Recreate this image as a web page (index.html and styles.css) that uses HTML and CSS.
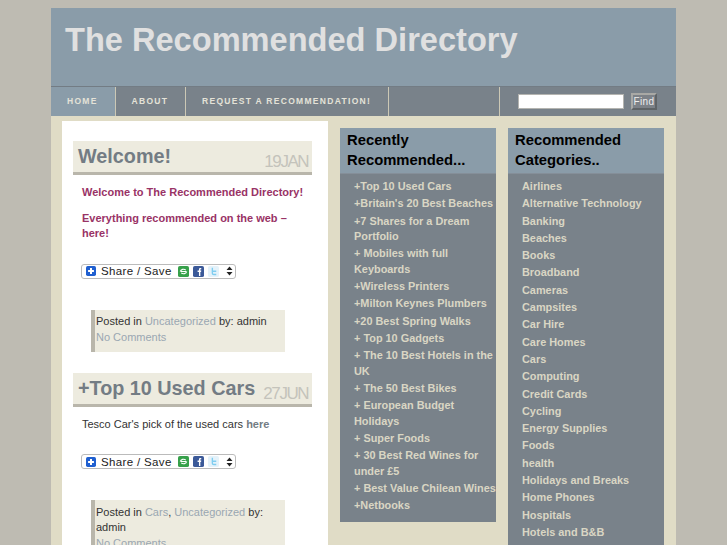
FILE: index.html
```html
<!DOCTYPE html>
<html lang="en">
<head>
  <meta charset="UTF-8">
  <meta name="viewport" content="width=device-width, initial-scale=1.0">
  <title>The Recommended Directory</title>
  <link rel="stylesheet" href="styles.css">
</head>
<body>
  <div class="wrapper">
    <div class="header">
      <h1>The Recommended Directory</h1>
    </div>

    <div class="nav">
      <ul class="nav-links">
        <li class="current"><a href="#">Home</a></li>
        <li><a href="#">About</a></li>
        <li><a href="#">Request a Recommendation!</a></li>
        <li class="nav-blank"></li>
      </ul>
      <form class="search">
        <input type="text" class="search-input">
        <input type="button" class="search-btn" value="Find">
      </form>
    </div>

    <div class="content">
      <div class="main">
        <div class="post">
          <div class="post-title">
            <h2>Welcome!</h2>
            <span class="post-date">19 JAN</span>
          </div>
          <div class="post-body">
            <p class="intro">Welcome to The Recommended Directory!</p>
            <p class="intro">Everything recommended on the web &#8211; here!</p>
            <div class="share">
              <svg class="share-plus" width="12" height="12" viewBox="0 0 12 12"><rect width="12" height="12" rx="2" fill="#1f5fd0"/><path d="M6 2.500v7M2.500 6h7" stroke="#fff" stroke-width="2.400"/></svg>
              <span class="share-label">Share / Save</span>
              <svg class="share-icon" width="12" height="12" viewBox="0 0 12 12"><rect width="12" height="12" rx="2" fill="#36a04a"/><path d="M2.500 6a3.500 3 0 0 1 6-1.500M9.500 6a3.500 3 0 0 1-6 1.500M3 6h6" stroke="#fff" stroke-width="1.200" fill="none"/></svg>
              <svg class="share-icon" width="12" height="12" viewBox="0 0 12 12"><rect width="12" height="12" rx="2" fill="#3b5998"/><path d="M6.500 11V6.500H5V5h1.500V3.800C6.500 2.500 7.300 2 9 2.200v1.300c-.9 0-1 .1-1 .7V5h1l-.2 1.500H8V11z" fill="#fff"/></svg>
              <svg class="share-icon" width="12" height="12" viewBox="0 0 12 12"><rect width="12" height="12" rx="2" fill="#e4f2fa"/><path d="M4 2v5.500C4 9 5 10 6.500 10H9V8.500H6.500C5.800 8.500 5.500 8 5.500 7.500V6.500H9V5H5.500V2z" fill="#7fcdf0"/></svg>
              <svg class="share-arrows" width="7" height="10" viewBox="0 0 7 10"><path d="M3.500 .5 6.500 4H.5zM3.500 9.500 .5 6h6z" fill="#222"/></svg>
            </div>
            <div class="post-meta">
              Posted in <a href="#">Uncategorized</a> by: admin<br>
              <a href="#">No Comments</a>
            </div>
          </div>
        </div>

        <div class="post">
          <div class="post-title">
            <h2>+Top 10 Used Cars</h2>
            <span class="post-date">27 JUN</span>
          </div>
          <div class="post-body">
            <p>Tesco Car's pick of the used cars <a class="more" href="#">here</a></p>
            <div class="share">
              <svg class="share-plus" width="12" height="12" viewBox="0 0 12 12"><rect width="12" height="12" rx="2" fill="#1f5fd0"/><path d="M6 2.500v7M2.500 6h7" stroke="#fff" stroke-width="2.400"/></svg>
              <span class="share-label">Share / Save</span>
              <svg class="share-icon" width="12" height="12" viewBox="0 0 12 12"><rect width="12" height="12" rx="2" fill="#36a04a"/><path d="M2.500 6a3.500 3 0 0 1 6-1.500M9.500 6a3.500 3 0 0 1-6 1.500M3 6h6" stroke="#fff" stroke-width="1.200" fill="none"/></svg>
              <svg class="share-icon" width="12" height="12" viewBox="0 0 12 12"><rect width="12" height="12" rx="2" fill="#3b5998"/><path d="M6.500 11V6.500H5V5h1.500V3.800C6.500 2.500 7.300 2 9 2.200v1.300c-.9 0-1 .1-1 .7V5h1l-.2 1.500H8V11z" fill="#fff"/></svg>
              <svg class="share-icon" width="12" height="12" viewBox="0 0 12 12"><rect width="12" height="12" rx="2" fill="#e4f2fa"/><path d="M4 2v5.500C4 9 5 10 6.500 10H9V8.500H6.500C5.800 8.500 5.500 8 5.500 7.500V6.500H9V5H5.500V2z" fill="#7fcdf0"/></svg>
              <svg class="share-arrows" width="7" height="10" viewBox="0 0 7 10"><path d="M3.500 .5 6.500 4H.5zM3.500 9.500 .5 6h6z" fill="#222"/></svg>
            </div>
            <div class="post-meta">
              Posted in <a href="#">Cars</a>, <a href="#">Uncategorized</a> by: admin<br>
              <a href="#">No Comments</a>
            </div>
          </div>
        </div>
      </div>

      <div class="sidebar sidebar-recent">
        <h3>Recently Recommended...</h3>
        <ul>
          <li><a href="#">+Top 10 Used Cars</a></li>
          <li><a href="#">+Britain's 20 Best Beaches</a></li>
          <li><a href="#">+7 Shares for a Dream Portfolio</a></li>
          <li><a href="#">+ Mobiles with full Keyboards</a></li>
          <li><a href="#">+Wireless Printers</a></li>
          <li><a href="#">+Milton Keynes Plumbers</a></li>
          <li><a href="#">+20 Best Spring Walks</a></li>
          <li><a href="#">+ Top 10 Gadgets</a></li>
          <li><a href="#">+ The 10 Best Hotels in the UK</a></li>
          <li><a href="#">+ The 50 Best Bikes</a></li>
          <li><a href="#">+ European Budget Holidays</a></li>
          <li><a href="#">+ Super Foods</a></li>
          <li><a href="#">+ 30 Best Red Wines for under £5</a></li>
          <li><a href="#">+ Best Value Chilean Wines</a></li>
          <li><a href="#">+Netbooks</a></li>
        </ul>
      </div>

      <div class="sidebar">
        <h3>Recommended Categories..</h3>
        <ul>
          <li><a href="#">Airlines</a></li>
          <li><a href="#">Alternative Technology</a></li>
          <li><a href="#">Banking</a></li>
          <li><a href="#">Beaches</a></li>
          <li><a href="#">Books</a></li>
          <li><a href="#">Broadband</a></li>
          <li><a href="#">Cameras</a></li>
          <li><a href="#">Campsites</a></li>
          <li><a href="#">Car Hire</a></li>
          <li><a href="#">Care Homes</a></li>
          <li><a href="#">Cars</a></li>
          <li><a href="#">Computing</a></li>
          <li><a href="#">Credit Cards</a></li>
          <li><a href="#">Cycling</a></li>
          <li><a href="#">Energy Supplies</a></li>
          <li><a href="#">Foods</a></li>
          <li><a href="#">health</a></li>
          <li><a href="#">Holidays and Breaks</a></li>
          <li><a href="#">Home Phones</a></li>
          <li><a href="#">Hospitals</a></li>
          <li><a href="#">Hotels and B&amp;B</a></li>
          <li><a href="#">Insurance</a></li>
        </ul>
      </div>
    </div>
  </div>
</body>
</html>
```

FILE: styles.css
```css
/* General Styles */
html {
  overflow: hidden;
  height: 100%;
}

body {
  font-family: 'Liberation Sans', Arial, sans-serif;
  font-size: 11px;
  background: #bebbb2;
  margin: 0;
  height: 100%;
  overflow: hidden;
  color: #333;
}

a {
  text-decoration: none;
}

.wrapper {
  width: 625px;
  margin: 8px 0 0 51px;
}

/* Header */
.header {
  background: #8a9ca9;
  height: 78px;
  box-sizing: border-box;
  padding: 14px 14px 0;
}

h1 {
  margin: 0;
  font-size: 32.600px;
  line-height: 36px;
  color: #e0e0e0;
}

/* Navigation */
.nav {
  display: flex;
  justify-content: space-between;
  height: 30px;
  background: #79828a;
  border-top: 1px solid #737c84;
  box-sizing: border-box;
}

.nav-links {
  display: flex;
  list-style: none;
  margin: 0;
  padding: 0;
}

.nav-links li {
  border-right: 1px solid #ccc8b5;
}

.nav-links a {
  display: block;
  padding: 0 16.800px 0 16px;
  line-height: 28px;
  font-size: 8.500px;
  font-weight: bold;
  letter-spacing: 1.300px;
  white-space: nowrap;
  text-transform: uppercase;
  color: #e4e2d8;
}

.nav-links .current {
  background: #8a9ca9;
}

.nav-links .nav-blank {
  width: 110px;
}

.search {
  display: flex;
  align-items: center;
  gap: 7px;
  padding-right: 19px;
  margin-top: -1px;
}

.search-input {
  width: 106px;
  height: 15px;
  padding: 0;
  box-sizing: border-box;
  background: #fff;
  border: 1px solid #b4b4b0;
  border-radius: 0;
  outline: none;
}

.search-btn {
  width: 26px;
  height: 17px;
  padding: 0;
  font-family: 'Liberation Sans', Arial, sans-serif;
  font-size: 10px;
  letter-spacing: 0.400px;
  color: #eee;
  background: #7d8288;
  border: 2px solid;
  border-color: #a9a9a5 #5f6467 #5f6467 #a9a9a5;
}

/* Content */
.content {
  display: flex;
  align-items: flex-start;
  background: #e0dcc6;
  padding: 5px 12px 0 11px;
  gap: 12px;
}

.main {
  width: 266px;
  background: #fff;
  padding: 20px 16px 0 11px;
  box-sizing: border-box;
}

.post {
  margin-bottom: 21px;
}

.post-title {
  display: flex;
  justify-content: space-between;
  align-items: flex-end;
  height: 31px;
  background: #edebdf;
  border-bottom: 3px solid #b9b6ab;
  padding: 0 4px 0 5px;
  white-space: nowrap;
}

h2 {
  margin: 0;
  font-size: 19.800px;
  line-height: 31px;
  color: #737c84;
  align-self: flex-start;
}

.post-date {
  font-size: 17px;
  line-height: 21px;
  letter-spacing: -1.500px;
  word-spacing: -3px;
  color: #c4c3bb;
}

.post-body {
  padding: 0 5px 0 9px;
}

.post-body p {
  margin: 0 0 10.600px;
  line-height: 15.400px;
  color: #333;
}

.post-body p:first-child {
  margin-top: 10px;
}

.post-body .intro {
  font-weight: bold;
  color: #993366;
}

.more {
  font-weight: bold;
  color: #737c84;
}

/* Share button */
.share {
  display: flex;
  align-items: center;
  gap: 4px;
  margin: 22px 0 0 -1px;
  height: 15px;
  width: 155px;
  box-sizing: border-box;
  padding: 0 2px 0 4px;
  background: #fff;
  border: 1px solid #bbb;
  border-radius: 3px;
}

.share svg {
  flex: none;
}

.share-plus {
  width: 10px;
  height: 10px;
}

.share-icon {
  width: 11px;
  height: 11px;
}

.share-label {
  flex: 1;
  padding-left: 1px;
  font-size: 11.500px;
  letter-spacing: 0.350px;
  white-space: nowrap;
  color: #222;
}

.share-arrows {
  margin-left: 3px;
}

.post-meta {
  width: 194px;
  box-sizing: border-box;
  margin: 31px 0 0 9px;
  padding: 4.500px 5px 6.700px 1px;
  background: #edebdf;
  border-left: 4px solid #b9b6ab;
  line-height: 15.400px;
  color: #333;
}

.post-meta a {
  color: #9aa7b2;
}

/* Sidebars */
.sidebar {
  width: 156px;
  margin-top: 7px;
  background: #79828a;
}

.sidebar h3 {
  margin: 0;
  padding: 1.500px 7px 2.500px;
  background: #8a9ca9;
  border-bottom: 1px solid #858f99;
  font-size: 14.800px;
  line-height: 20.500px;
  color: #000;
}

.sidebar ul {
  list-style: none;
  margin: 0;
  padding: 5px 0 6.600px 14px;
}

.sidebar li {
  padding-bottom: 1.900px;
  line-height: 15.400px;
}

.sidebar a {
  font-size: 10.900px;
  font-weight: bold;
  color: #d9d6c4;
}
```
